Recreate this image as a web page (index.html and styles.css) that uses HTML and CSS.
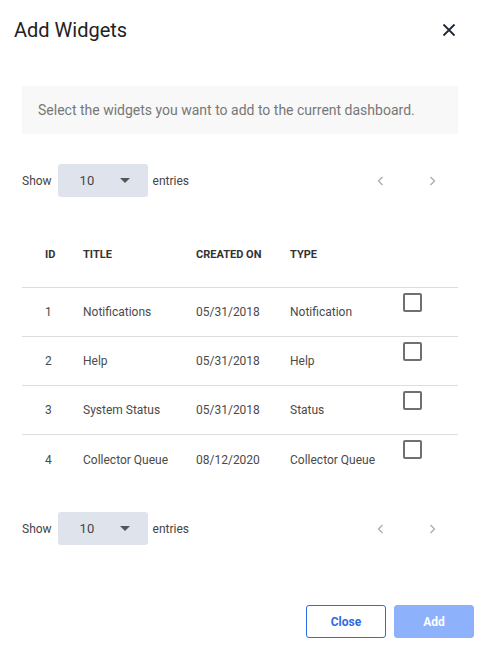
FILE: index.html
```html
<!DOCTYPE html>
<html>
<head>
<meta charset="utf-8">
<link rel="stylesheet" href="styles.css">
</head>
<body>
<div class="dialog">
  <div class="header">
    <h1 class="title">Add Widgets</h1>
    <button class="close-x" aria-label="Close">
      <svg width="14" height="14" viewBox="0 0 14 14"><path d="M1.5 1.5 L12.5 12.5 M12.5 1.5 L1.5 12.5" stroke="#1f2937" stroke-width="1.8" fill="none"/></svg>
    </button>
  </div>
  <div class="info">Select the widgets you want to add to the current dashboard.</div>

  <div class="controls top">
    <span class="lbl">Show</span>
    <div class="select"><span>10</span><span class="caret"></span></div>
    <span class="lbl">entries</span>
    <div class="pager">
      <svg class="chev" width="7" height="10" viewBox="0 0 7 10"><path d="M5.5 1 L1.5 5 L5.5 9" stroke="#aaa" stroke-width="1.3" fill="none"/></svg>
      <svg class="chev" width="7" height="10" viewBox="0 0 7 10"><path d="M1.5 1 L5.5 5 L1.5 9" stroke="#aaa" stroke-width="1.3" fill="none"/></svg>
    </div>
  </div>

  <div class="table">
    <div class="row head">
      <div>ID</div><div>TITLE</div><div>CREATED ON</div><div>TYPE</div><div></div>
    </div>
    <div class="row">
      <div>1</div><div>Notifications</div><div>05/31/2018</div><div>Notification</div><div><span class="cb"></span></div>
    </div>
    <div class="row">
      <div>2</div><div>Help</div><div>05/31/2018</div><div>Help</div><div><span class="cb"></span></div>
    </div>
    <div class="row">
      <div>3</div><div>System Status</div><div>05/31/2018</div><div>Status</div><div><span class="cb"></span></div>
    </div>
    <div class="row last">
      <div>4</div><div>Collector Queue</div><div>08/12/2020</div><div>Collector Queue</div><div><span class="cb"></span></div>
    </div>
  </div>

  <div class="controls bottom">
    <span class="lbl">Show</span>
    <div class="select"><span>10</span><span class="caret"></span></div>
    <span class="lbl">entries</span>
    <div class="pager">
      <svg class="chev" width="7" height="10" viewBox="0 0 7 10"><path d="M5.5 1 L1.5 5 L5.5 9" stroke="#aaa" stroke-width="1.3" fill="none"/></svg>
      <svg class="chev" width="7" height="10" viewBox="0 0 7 10"><path d="M1.5 1 L5.5 5 L1.5 9" stroke="#aaa" stroke-width="1.3" fill="none"/></svg>
    </div>
  </div>

  <div class="footer">
    <button class="btn btn-outline">Close</button>
    <button class="btn btn-primary">Add</button>
  </div>
</div>
</body>
</html>
```
FILE: styles.css
```css
* { box-sizing: border-box; }
html, body { margin: 0; padding: 0; background: #fff; }
body { font-family: Roboto, "Liberation Sans", Arial, sans-serif; color: #444; }

.dialog { width: 481px; height: 665px; position: relative; }

.header { display: flex; align-items: center; justify-content: space-between; height: 60px; padding: 0 25px 0 14px; }
.title { margin: 0; font-size: 20px; font-weight: 400; color: #222; line-height: 24px; }
.close-x { border: 0; background: none; padding: 0; width: 14px; height: 14px; display: flex; cursor: pointer; }

.info { margin: 26px 23px 0 22px; height: 48px; background: #f8f8f8; padding-left: 16px; display: flex; align-items: center; font-size: 14px; color: #777; }

.controls { display: flex; align-items: center; padding: 0 23px 0 22px; height: 33px; font-size: 12px; color: #444; }
.controls.top { margin-top: 30px; }
.controls.bottom { margin-top: 28px; }
.select { width: 90px; height: 33px; margin: 0 5px 0 6px; background: #dfe3ec; border-radius: 3px; display: flex; align-items: center; padding-left: 22px; font-size: 13px; color: #444; }
.select .caret { margin-left: 26px; width: 0; height: 0; border-left: 5px solid transparent; border-right: 5px solid transparent; border-top: 5px solid #555; }
.pager { margin-left: auto; display: flex; align-items: center; gap: 45px; padding-right: 22px; }
.chev { display: block; }

.table { margin: 51px 23px 0 22px; }
.row { display: grid; grid-template-columns: 61px 113px 94px 113px 1fr; height: 49px; border-bottom: 1px solid #ddd; font-size: 12px; color: #4a4a4a; }
.row > div { display: flex; align-items: center; }
.row > div:first-child { padding-left: 23px; }
.row.head { height: 40px; font-size: 11px; font-weight: 700; color: #333; }
.row.head > div { align-items: flex-start; }
.row.last { border-bottom: 0; }
.row > div:last-child { align-items: flex-start; padding-top: 5px; }
.cb { width: 19px; height: 19px; border: 2px solid #707070; border-radius: 2px; display: block; }

.footer { position: absolute; right: 7px; top: 605px; display: flex; gap: 8px; }
.btn { width: 80px; height: 33px; border-radius: 3px; font-family: Roboto, "Liberation Sans", Arial, sans-serif; font-size: 12px; font-weight: 700; cursor: pointer; }
.btn-outline { background: #fff; border: 1px solid #2d6ae3; color: #2d6ae3; }
.btn-primary { background: #8eb1fc; border: 1px solid #8eb1fc; color: #fff; }
```
